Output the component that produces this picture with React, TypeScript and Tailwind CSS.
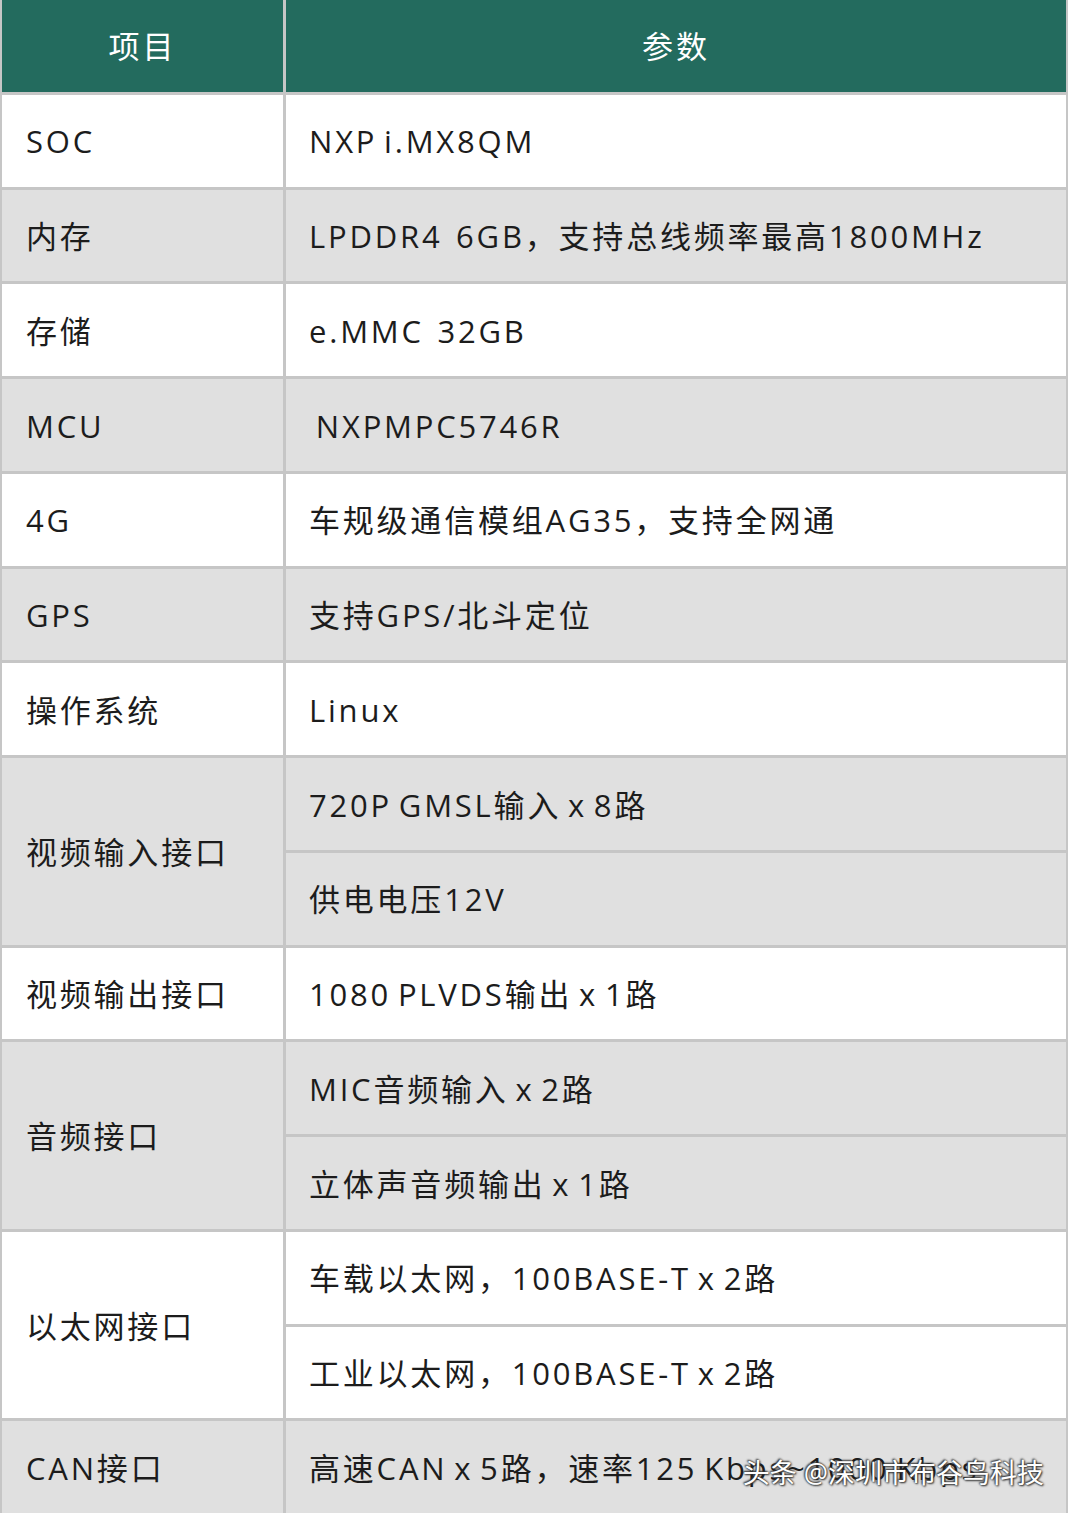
import React from "react";

type Row = { label: string; values: string[]; gray: boolean };

const rows: Row[] = [
  { label: "SOC", values: ["NXP i.MX8QM"], gray: false },
  { label: "内存", values: ["LPDDR4  6GB，支持总线频率最高1800MHz"], gray: true },
  { label: "存储", values: ["e.MMC  32GB"], gray: false },
  { label: "MCU", values: ["\u00a0NXPMPC5746R"], gray: true },
  { label: "4G", values: ["车规级通信模组AG35，支持全网通"], gray: false },
  { label: "GPS", values: ["支持GPS/北斗定位"], gray: true },
  { label: "操作系统", values: ["Linux"], gray: false },
  { label: "视频输入接口", values: ["720P GMSL输入 x 8路", "供电电压12V"], gray: true },
  { label: "视频输出接口", values: ["1080 PLVDS输出 x 1路"], gray: false },
  { label: "音频接口", values: ["MIC音频输入 x 2路", "立体声音频输出 x 1路"], gray: true },
  { label: "以太网接口", values: ["车载以太网，100BASE-T x 2路", "工业以太网，100BASE-T x 2路"], gray: false },
  { label: "CAN接口", values: ["高速CAN x 5路，速率125 Kbps~1000 Kbps"], gray: true },
];

const font = { fontFamily: '"Open Sans", "Noto Sans CJK SC", sans-serif' };

const ValueCell = ({ text, gray }: { text: string; gray: boolean }) => (
  <div
    className={`flex items-center whitespace-pre pl-[23px] pt-[2px] text-[31px] tracking-[0.09em] [word-spacing:-4px] text-[#1c1c1c] ${
      gray ? "bg-[#e0e0e0]" : "bg-white"
    }`}
  >
    {text}
  </div>
);

export default function App() {
  return (
    <div className="relative h-[1513px] w-[1068px] overflow-hidden bg-[#c6c6c6]" style={font}>
      <div className="grid h-full grid-cols-[281px_1fr] grid-rows-[repeat(16,minmax(0,1fr))] gap-x-[3px] gap-y-[3px] pl-[2px] pr-[2px]">
        <div className="flex items-center justify-center bg-[#236b5e] text-[31px] tracking-[0.1em] text-white">项目</div>
        <div className="flex items-center justify-center bg-[#236b5e] text-[31px] tracking-[0.1em] text-white">参数</div>
        {rows.map((r) => (
          <React.Fragment key={r.label}>
            <div
              className={`flex items-center pl-[24px] pt-[2px] text-[31px] tracking-[0.09em] text-[#1c1c1c] ${
                r.gray ? "bg-[#e0e0e0]" : "bg-white"
              } ${r.values.length > 1 ? "row-span-2" : ""}`}
            >
              {r.label}
            </div>
            {r.values.length > 1 ? (
              <div className="row-span-2 grid grid-rows-2 gap-y-[3px]">
                {r.values.map((v) => (
                  <ValueCell key={v} text={v} gray={r.gray} />
                ))}
              </div>
            ) : (
              <ValueCell text={r.values[0]} gray={r.gray} />
            )}
          </React.Fragment>
        ))}
      </div>
      <div
        className="absolute bottom-[20px] right-[24px] text-[27px] text-white"
        style={{ textShadow: "0 0 2px #333, 1px 1px 2px #333, -1px -1px 2px #333" }}
      >
        头条 @深圳市布谷鸟科技
      </div>
    </div>
  );
}
